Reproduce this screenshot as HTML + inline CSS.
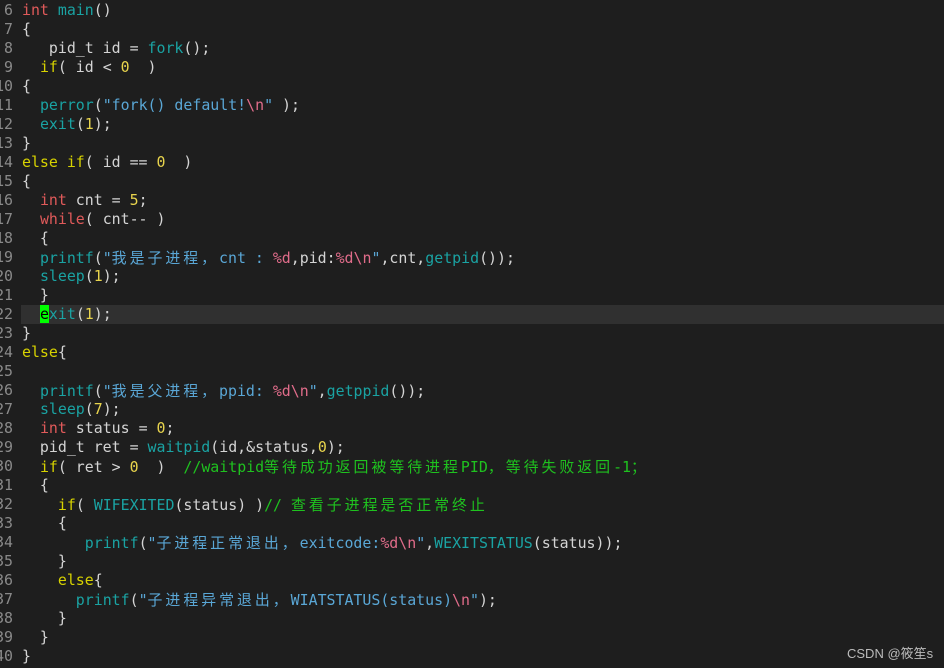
<!DOCTYPE html>
<html><head><meta charset="utf-8"><style>
html,body{margin:0;padding:0;background:#1e1e1e;width:944px;height:668px;overflow:hidden}
#c{position:absolute;left:0;top:1px;width:944px}
.l{position:relative;height:19px;line-height:19px;font-family:"DejaVu Sans Mono","Liberation Mono","Noto Sans CJK SC",monospace;font-size:14.9px;color:#d4d4d4;white-space:pre}
.n{position:absolute;left:-20px;width:33px;text-align:right;color:#8a8a8a}
.t{position:absolute;left:22px}
.z{font-family:"Noto Sans CJK SC",sans-serif;letter-spacing:3px}
.k{color:#e05a5a}.f{color:#1aa3a3}.y{color:#d7d200}.d{color:#e8d44d}.s{color:#5aa7d6}.e{color:#e06c8a}.g{color:#1fc21f}.w{color:#d4d4d4}
.hl{position:absolute;left:21px;right:0;top:0;height:19px;background:#303030}
.cur{background:#00ff00;color:#000}
#wm{position:absolute;left:847px;top:643px;font-family:"Liberation Sans","Noto Sans CJK SC",sans-serif;font-size:13px;color:#bbb}
</style></head><body><div id="c">
<div class="l"><span class="n">6</span><span class="t"><span class="k">int</span> <span class="f">main</span>()</span></div>
<div class="l"><span class="n">7</span><span class="t">{</span></div>
<div class="l"><span class="n">8</span><span class="t">   pid_t id = <span class="f">fork</span>();</span></div>
<div class="l"><span class="n">9</span><span class="t">  <span class="y">if</span>( id &lt; <span class="d">0</span>  )</span></div>
<div class="l"><span class="n">10</span><span class="t">{</span></div>
<div class="l"><span class="n">11</span><span class="t">  <span class="f">perror</span>(<span class="s">"fork() default!<span class="e">\n</span>"</span> );</span></div>
<div class="l"><span class="n">12</span><span class="t">  <span class="f">exit</span>(<span class="d">1</span>);</span></div>
<div class="l"><span class="n">13</span><span class="t">}</span></div>
<div class="l"><span class="n">14</span><span class="t"><span class="y">else if</span>( id == <span class="d">0</span>  )</span></div>
<div class="l"><span class="n">15</span><span class="t">{</span></div>
<div class="l"><span class="n">16</span><span class="t">  <span class="k">int</span> cnt = <span class="d">5</span>;</span></div>
<div class="l"><span class="n">17</span><span class="t">  <span class="k">while</span>( cnt-- )</span></div>
<div class="l"><span class="n">18</span><span class="t">  {</span></div>
<div class="l"><span class="n">19</span><span class="t">  <span class="f">printf</span>(<span class="s">"<span class="z">我是子进程，</span>cnt : <span class="e">%d</span><span class="w">,pid:</span><span class="e">%d\n</span>"</span>,cnt,<span class="f">getpid</span>());</span></div>
<div class="l"><span class="n">20</span><span class="t">  <span class="f">sleep</span>(<span class="d">1</span>);</span></div>
<div class="l"><span class="n">21</span><span class="t">  }</span></div>
<div class="l"><div class="hl"></div><span class="n">22</span><span class="t">  <span class="cur">e</span><span class="f">xit</span>(<span class="d">1</span>);</span></div>
<div class="l"><span class="n">23</span><span class="t">}</span></div>
<div class="l"><span class="n">24</span><span class="t"><span class="y">else</span>{</span></div>
<div class="l"><span class="n">25</span><span class="t"></span></div>
<div class="l"><span class="n">26</span><span class="t">  <span class="f">printf</span>(<span class="s">"<span class="z">我是父进程，</span>ppid: <span class="e">%d\n</span>"</span>,<span class="f">getppid</span>());</span></div>
<div class="l"><span class="n">27</span><span class="t">  <span class="f">sleep</span>(<span class="d">7</span>);</span></div>
<div class="l"><span class="n">28</span><span class="t">  <span class="k">int</span> status = <span class="d">0</span>;</span></div>
<div class="l"><span class="n">29</span><span class="t">  pid_t ret = <span class="f">waitpid</span>(id,&amp;status,<span class="d">0</span>);</span></div>
<div class="l"><span class="n">30</span><span class="t">  <span class="y">if</span>( ret &gt; <span class="d">0</span>  )  <span class="g">//waitpid<span class="z">等待成功返回被等待进程</span>PID<span class="z">，等待失败返回</span>-1<span class="z">；</span></span></span></div>
<div class="l"><span class="n">31</span><span class="t">  {</span></div>
<div class="l"><span class="n">32</span><span class="t">    <span class="y">if</span>( <span class="f">WIFEXITED</span>(status) )<span class="g">// <span class="z">查看子进程是否正常终止</span></span></span></div>
<div class="l"><span class="n">33</span><span class="t">    {</span></div>
<div class="l"><span class="n">34</span><span class="t">       <span class="f">printf</span>(<span class="s">"<span class="z">子进程正常退出，</span>exitcode:<span class="e">%d\n</span>"</span>,<span class="f">WEXITSTATUS</span>(status));</span></div>
<div class="l"><span class="n">35</span><span class="t">    }</span></div>
<div class="l"><span class="n">36</span><span class="t">    <span class="y">else</span>{</span></div>
<div class="l"><span class="n">37</span><span class="t">      <span class="f">printf</span>(<span class="s">"<span class="z">子进程异常退出，</span>WIATSTATUS(status)<span class="e">\n</span>"</span>);</span></div>
<div class="l"><span class="n">38</span><span class="t">    }</span></div>
<div class="l"><span class="n">39</span><span class="t">  }</span></div>
<div class="l"><span class="n">40</span><span class="t">}</span></div>
</div>
<div id="wm">CSDN @筱笙s</div>
</body></html>
